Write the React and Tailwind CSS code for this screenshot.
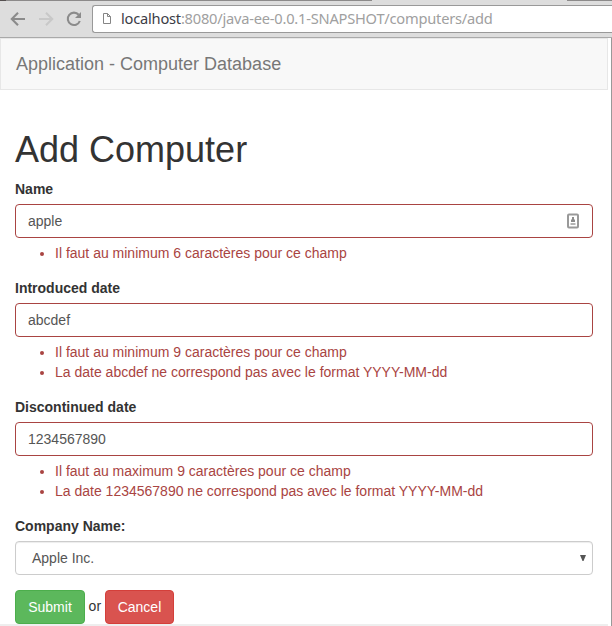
function Toolbar() {
  return (
    <div className="flex h-[38px] flex-col border-b border-[#a9a9a9] bg-[#dddddd]">
      <div className="flex h-px">
        <div className="w-[6px] bg-[#555050]" />
        <div className="w-[366px] bg-[#8c8a8a]" />
        <div className="ml-auto w-[45px] bg-[#8c8a8a]" />
      </div>
      <div className="mt-1 flex h-7">
        <svg className="h-7 w-[92px] shrink-0" viewBox="0 0 92 28" fill="none" strokeWidth="2.1">
          <path d="M25 14H12.5M18 7.8L11.8 14l6.2 6.2" stroke="#8b8b8b" />
          <path d="M39 14h12.5M46 7.8l6.2 6.2-6.2 6.2" stroke="#c8c8c8" />
          <path d="M78.7 9.8A6.2 6.2 0 1 0 79.8 16" stroke="#8b8b8b" />
          <path d="M81 7v6h-6z" fill="#8b8b8b" />
        </svg>
        <div className="flex flex-1 items-center rounded-l-[3px] border border-r-0 border-[#999999] bg-white">
          <svg className="ml-[9px] h-3 w-[10px] shrink-0" viewBox="0 0 10 12" fill="none" stroke="#858585">
            <path d="M1.5 .5h4l3 3v7h-7zM5.5 .5v3h3" />
          </svg>
          <div className="mb-[2px] ml-[9px] whitespace-nowrap font-['Noto_Sans',sans-serif] text-[14.67px] leading-5 tracking-[-0.226px] text-[#a0a0a0]">
            <span className="text-[#3c3c46]">localhost</span>:8080/java-ee-0.0.1-SNAPSHOT/computers/add
          </div>
        </div>
      </div>
    </div>
  );
}

function Field({ label, value, errors, card }) {
  return (
    <div className="mb-[15px]">
      <label className="mb-[5px] block font-bold">{label}</label>
      <div className="flex h-[34px] items-center justify-between rounded-[4px] border border-[#a94442] px-3 text-[#555555]">
        <span>{value}</span>
        {card && (
          <svg className="mr-px h-4 w-3" viewBox="0 0 12 16" fill="none">
            <rect x="1" y="1.5" width="10" height="13" rx="1" stroke="#999999" strokeWidth="2" />
            <path d="M5 4h2v2.5h1V9H4V6.5h1z" fill="#8c8c8c" />
            <path d="M3.5 11h5" stroke="#b4b4b4" strokeWidth="2" />
          </svg>
        )}
      </div>
      <ul className="mt-[5px] list-disc pl-10 text-[#a94442]">
        {errors.map((e) => (
          <li key={e}>{e}</li>
        ))}
      </ul>
    </div>
  );
}

export default function App() {
  return (
    <div className="flex h-[626px] w-full flex-col overflow-hidden bg-white font-['Liberation_Sans',Arial,sans-serif] text-[14px] leading-5 text-[#333333]">
      <Toolbar />
      <div className="flex flex-1 flex-col border-r border-[#999999] pr-[3px]">
        <nav className="flex h-[52px] items-center border border-[#e7e7e7] bg-[#f8f8f8] px-[15px] text-[18px] text-[#777777]">
          Application - Computer Database
        </nav>
        <main className="pl-[15px] pr-[15px] pt-10">
          <h1 className="mb-[9px] h-10 text-[36px] leading-[40px]">Add Computer</h1>
          <Field label="Name" value="apple" card errors={["Il faut au minimum 6 caractères pour ce champ"]} />
          <Field
            label="Introduced date"
            value="abcdef"
            errors={[
              "Il faut au minimum 9 caractères pour ce champ",
              "La date abcdef ne correspond pas avec le format YYYY-MM-dd",
            ]}
          />
          <Field
            label="Discontinued date"
            value="1234567890"
            errors={[
              "Il faut au maximum 9 caractères pour ce champ",
              "La date 1234567890 ne correspond pas avec le format YYYY-MM-dd",
            ]}
          />
          <label className="mb-[5px] block font-bold">Company Name:</label>
          <div className="mb-[15px] flex h-[34px] items-center justify-between rounded-[4px] border border-[#cccccc] pl-4 pr-[6px] text-[#555555] shadow-[inset_0_1px_1px_rgba(0,0,0,0.075)]">
            <span>Apple Inc.</span>
            <svg className="h-[6px] w-[6px]" viewBox="0 0 6 6">
              <path d="M0 0h6L3.5 6h-1z" fill="#555555" />
            </svg>
          </div>
          <div className="flex h-[34px]">
            <button className="w-[70px] rounded-[4px] border border-[#4cae4c] bg-[#5cb85c] text-white">Submit</button>
            <span className="ml-[3.6px] mr-1 mt-[6px] w-[12.4px]">or</span>
            <button className="w-[69px] rounded-[4px] border border-[#d43f3a] bg-[#d9534f] text-white">Cancel</button>
          </div>
        </main>
        <div className="h-[2px] bg-[#eeeeee]" />
      </div>
    </div>
  );
}
